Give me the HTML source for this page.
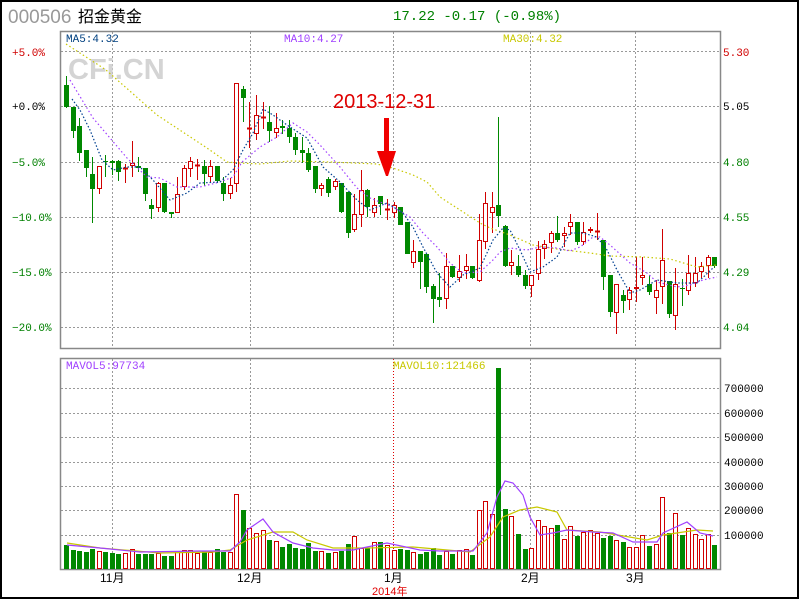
<!DOCTYPE html>
<html><head><meta charset="utf-8"><style>
html,body{margin:0;padding:0;background:#fff;}
#c{position:relative;width:800px;height:600px;overflow:hidden;}
svg{position:absolute;left:0;top:0;font-family:"Liberation Mono","Noto Sans CJK SC",monospace;}
</style></head><body><div id="c">
<svg id="s" width="800" height="600" xmlns="http://www.w3.org/2000/svg">
<rect x="1" y="1" width="797" height="597" fill="#fff" stroke="#000" stroke-width="2"/>
<text x="8" y="23" font-size="19" fill="#999" style="font-family:'Liberation Sans',sans-serif">000506</text>
<text x="78" y="22" font-size="16" fill="#000" style="font-family:'Liberation Sans','Noto Sans CJK SC',sans-serif">招金黄金</text>
<text x="393" y="20" font-size="14" fill="#008000">17.22 -0.17 (-0.98%)</text>
<g id="grid"></g>
<rect x="60.5" y="31.5" width="660" height="317" fill="none" stroke="#888" stroke-width="1.5"/>
<rect x="60.5" y="358.5" width="660" height="211" fill="none" stroke="#888" stroke-width="1.5"/>
<text x="68" y="79" font-size="29" font-weight="bold" fill="#d4d4d4" style="font-family:'Liberation Sans',sans-serif">CFi.CN</text>
<text x="66" y="42" font-size="11" fill="#004080">MA5:4.32</text>
<text x="284" y="42" font-size="11" fill="#a040ff">MA10:4.27</text>
<text x="503" y="42" font-size="11" fill="#c8c800">MA30:4.32</text>
<text x="66" y="369" font-size="11" fill="#a040ff">MAVOL5:97734</text>
<text x="393" y="369" font-size="11" fill="#c8c800">MAVOL10:121466</text>
<g font-size="11">
<text x="12" y="56" fill="#d00000">+5.0%</text>
<text x="12" y="110" fill="#000">+0.0%</text>
<text x="12" y="166" fill="#008000">−5.0%</text>
<text x="12" y="221" fill="#008000">−10.0%</text>
<text x="12" y="276" fill="#008000">−15.0%</text>
<text x="12" y="331" fill="#008000">−20.0%</text>
<text x="723" y="56" fill="#d00000">5.30</text>
<text x="723" y="110" fill="#000">5.05</text>
<text x="723" y="166" fill="#008000">4.80</text>
<text x="723" y="221" fill="#008000">4.55</text>
<text x="723" y="276" fill="#008000">4.29</text>
<text x="723" y="331" fill="#008000">4.04</text>
<text x="724" y="392" fill="#000">700000</text>
<text x="724" y="417" fill="#000">600000</text>
<text x="724" y="441" fill="#000">500000</text>
<text x="724" y="466" fill="#000">400000</text>
<text x="724" y="490" fill="#000">300000</text>
<text x="724" y="514" fill="#000">200000</text>
<text x="724" y="539" fill="#000">100000</text>
</g>
<g font-size="12" fill="#000" style="font-family:'Liberation Sans','Noto Sans CJK SC',sans-serif">
<text x="100" y="582">11月</text><text x="237" y="582">12月</text><text x="384" y="582">1月</text><text x="521" y="582">2月</text><text x="626" y="582">3月</text>
</g>
<text x="372" y="595" font-size="11" fill="#e00000" style="font-family:'Liberation Sans','Noto Sans CJK SC',sans-serif">2014年</text>
<g id="data"></g>
<text x="333" y="108" font-size="20" fill="#e00000" style="font-family:'Liberation Sans',sans-serif">2013-12-31</text>
<rect x="384" y="118" width="5" height="40" fill="#f00000"/>
<polygon points="377,151 396,151 388,176 386,176" fill="#f00000"/>
</svg>
<script>
var s=document.getElementById('data'),g=document.getElementById('grid'),NS='http://www.w3.org/2000/svg';
function el(p,t,a){var e=document.createElementNS(NS,t);for(var k in a)e.setAttribute(k,a[k]);p.appendChild(e);return e;}
[51.5,106.5,162.5,217.5,272.5,327.5].forEach(function(y){el(g,'line',{x1:61,x2:720,y1:y,y2:y,stroke:'#999','stroke-dasharray':'2,2'});});
[388.5,413.5,437.5,462.5,486.5,510.5,535.5].forEach(function(y){el(g,'line',{x1:61,x2:720,y1:y,y2:y,stroke:'#999','stroke-dasharray':'2,2'});});
[112.5,250.5,530.5,635.5].forEach(function(x){el(g,'line',{x1:x,x2:x,y1:32,y2:348,stroke:'#999','stroke-dasharray':'2,2'});el(g,'line',{x1:x,x2:x,y1:359,y2:569,stroke:'#999','stroke-dasharray':'2,2'});});
el(g,'line',{x1:393.5,x2:393.5,y1:32,y2:348,stroke:'#999','stroke-dasharray':'2,2'});
el(g,'line',{x1:393.5,x2:393.5,y1:359,y2:569,stroke:'#e00000','stroke-dasharray':'1,2'});
var C=[["g",85,107,76,108],["g",107,131,107,138],["g",126,153,118,161],["g",150,168,150,177],["g",174,189,157,223],["r",166,189,166,194],["g",161,162,155,177],["g",161,163,160,175],["g",161,172,160,181],["r",168,169,164,183],["r",163,166,141,177],["g",166,168,157,172],["g",168,194,168,201],["g",205,209,199,219],["r",183,208,182,212],["g",183,212,183,213],["g",212,214,212,218],["r",194,213,177,213],["r",168,187,165,190],["r",161,169,157,177],["r",165,165,159,180],["g",166,174,160,186],["r",166,177,160,183],["g",166,181,166,183],["g",183,194,177,201],["r",185,194,178,199],["r",83,184,83,192],["g",89,98,86,122],["r",128,128,102,148],["r",115,134,95,140],["r",117,117,102,129],["g",122,131,106,142],["r",128,133,113,138],["g",126,128,120,134],["g",128,137,120,143],["g",137,150,133,155],["g",150,153,137,163],["g",153,170,148,172],["g",166,189,166,193],["r",185,189,183,196],["g",179,193,177,197],["r",181,187,179,190],["g",183,212,183,213],["g",192,233,192,238],["r",214,230,194,232],["r",190,215,170,227],["g",190,207,189,217],["r",205,213,198,217],["g",196,204,196,215],["r",209,209,199,220],["r",205,213,202,218],["g",207,225,207,225],["g",222,254,222,254],["r",251,263,240,268],["g",251,262,251,289],["g",254,287,254,293],["g",286,299,284,323],["g",297,300,273,307],["r",266,299,253,309],["g",266,277,266,278],["r",271,278,255,282],["r",266,271,254,279],["g",266,278,266,279],["r",240,281,214,282],["r",203,242,192,249],["r",207,213,192,233],["g",205,216,117,227],["g",226,266,225,267],["r",262,266,250,275],["g",266,275,255,277],["g",275,286,270,289],["r",275,286,275,297],["r",249,274,241,280],["r",244,249,240,259],["r",233,243,231,253],["g",233,240,216,242],["r",233,236,227,247],["r",222,227,214,235],["g",222,242,222,245],["r",232,242,222,245],["r",229,231,227,233],["r",231,231,213,240],["g",240,277,240,290],["g",275,312,275,317],["r",284,313,284,334],["g",295,301,290,313],["r",290,300,287,310],["r",287,289,257,302],["r",275,278,257,285],["g",284,292,275,295],["r",290,298,280,314],["r",260,287,229,304],["g",281,314,281,318],["r",284,316,268,330],["g",288,289,279,306],["r",273,291,255,295],["r",273,283,257,287],["r",266,272,262,278],["r",257,266,255,278],["g",257,266,257,268]];
var V=[545,550,551,552,549,551,552,553,554,553,549,554,554,554,553,556,556,551,550,550,553,551,552,549,552,552,494,510,528,533,530,540,541,547,544,548,549,543,551,551,553,552,551,544,536,548,548,542,542,545,550,549,550,552,554,552,548,555,551,554,550,549,555,510,501,514,368,509,516,534,549,548,520,526,528,525,539,526,536,532,530,533,538,536,540,542,547,547,535,546,544,497,533,513,535,528,534,539,534,545];
var R='#d00000',G='#008800';
C.forEach(function(c,i){var x=Math.round(66+i*6.55),col=c[0]=='r'?R:G;
el(s,'line',{x1:x+.5,x2:x+.5,y1:c[3],y2:c[4],stroke:col});
var h=Math.max(c[2]-c[1],1);
if(c[0]=='g')el(s,'rect',{x:x-2,y:c[1],width:5,height:h,fill:G});
else if(h<=1)el(s,'line',{x1:x-2,x2:x+3,y1:c[1]+.5,y2:c[1]+.5,stroke:R,'stroke-width':2});
else el(s,'rect',{x:x-1.5,y:c[1]+.5,width:4,height:h-1,fill:'#fff',stroke:R});
var vy=V[i];
if(c[0]=='g')el(s,'rect',{x:x-2,y:vy,width:5,height:569-vy,fill:G});
else el(s,'rect',{x:x-1.5,y:vy+.5,width:4,height:568-vy,fill:'#fff',stroke:R});
});
function pl(pts,col,dash){el(s,'polyline',{points:pts,fill:'none',stroke:col,'stroke-width':1.2,'stroke-dasharray':dash||'none'});}
pl("66,44 100,66 106,70 157,115 207,148 227,162 240,163 260,164 290,161 330,162 377,164 393,168 413,175 427,182 440,197 460,210 480,223 490,228 510,235 533,245 557,249 590,253 610,256 643,257 670,259 697,267 717,265",'#c8c800','1.5,2.5');
pl("70,80 93,118 110,138 127,158 147,177 160,178 177,187 200,187 220,182 233,177 242,162 260,147 277,137 293,123 307,132 320,145 340,167 357,188 370,198 380,202 393,207 410,217 423,233 437,247 450,263 463,273 480,272 493,260 500,252 510,248 527,250 540,247 557,248 570,251 580,247 593,237 600,237 610,245 630,263 647,273 657,282 677,287 690,285 703,280 717,277",'#a040ff','1.5,2.5');
pl("72,99 80,110 90,130 102,160 113,170 127,167 140,167 153,180 170,200 187,193 200,183 220,182 233,170 243,150 253,133 263,109 273,115 287,125 307,138 323,167 340,182 357,200 370,210 387,203 403,213 413,227 423,247 437,273 450,287 463,275 480,268 493,240 503,228 510,230 520,250 530,272 543,267 557,257 570,233 583,233 597,237 607,250 617,270 630,293 640,290 657,280 677,283 697,283 713,268",'#004090','1.5,2');
pl("67,543 100,548 160,553 213,552 230,550 247,540 273,532 293,532 307,540 333,548 367,548 413,547 470,552 490,537 503,517 520,510 537,507 557,512 567,530 600,532 647,540 663,535 697,530 713,531",'#c8c800');
pl("67,545 100,548 140,552 200,551 230,551 240,542 247,530 263,519 273,532 293,543 313,548 333,550 353,550 367,547 387,543 420,550 440,551 473,551 487,533 497,497 505,481 513,483 523,495 530,517 540,535 553,533 567,530 593,532 613,533 633,542 657,542 663,533 687,522 700,533 713,536",'#a040ff');
</script>
</div></body></html>
